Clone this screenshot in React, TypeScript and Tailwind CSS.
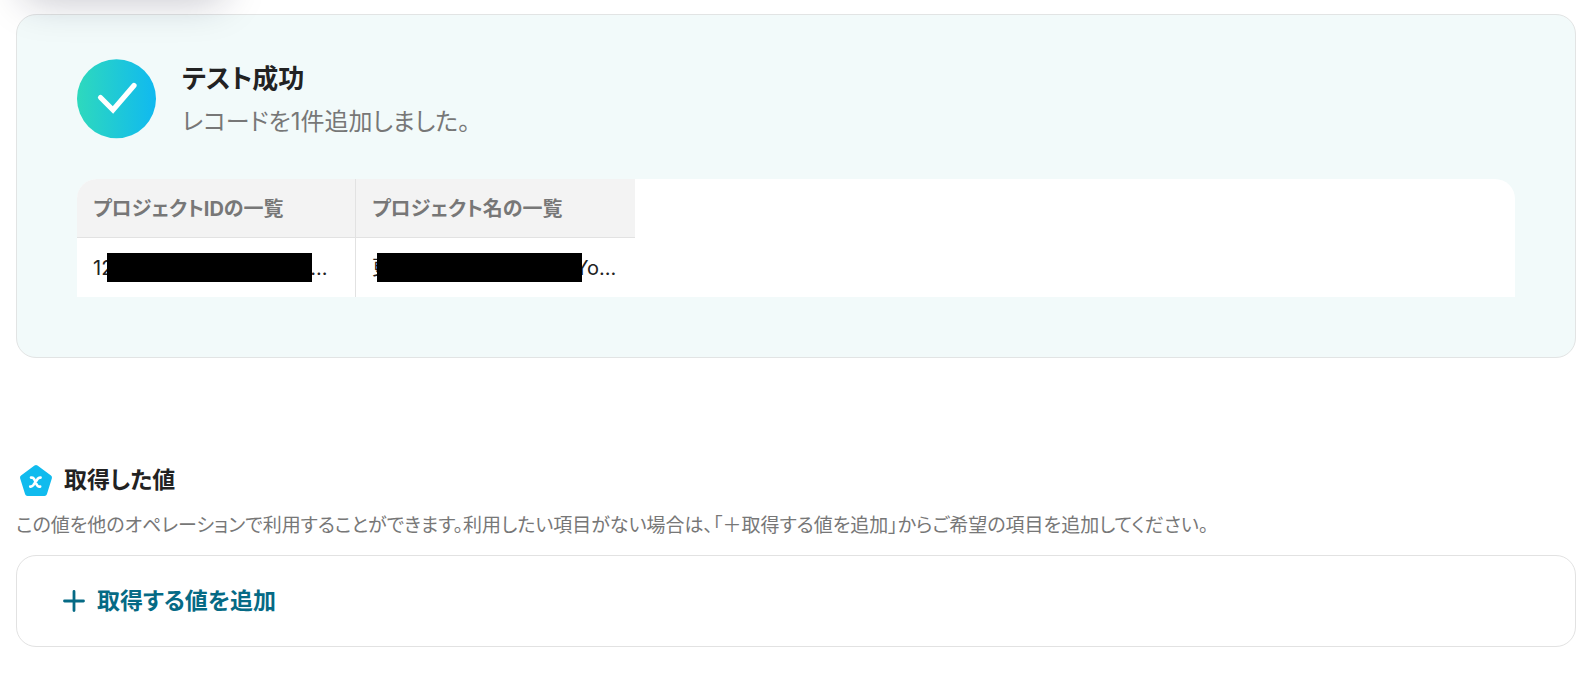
import React from 'react';

const columns = [
  { label: 'プロジェクトIDの一覧', head: '12', tail: '...', mask: '-ml-1.5', gap: '-ml-0.5' },
  { label: 'プロジェクト名の一覧', head: '更', tail: 'Yo...', mask: '-ml-[15px]', gap: '-ml-[7px]' },
];

function SuccessIcon() {
  return (
    <svg viewBox="0 0 80 80" className="size-20 shrink-0" aria-hidden="true">
      <defs>
        <linearGradient id="success" x1="0" y1="0" x2="1" y2="0">
          <stop offset="0" stopColor="#2ed9bd" />
          <stop offset="1" stopColor="#10b9f0" />
        </linearGradient>
      </defs>
      <circle cx="39.5" cy="39.7" r="39.5" fill="url(#success)" />
      <path
        d="M23.5 38.5 L36 51 L57 26.5"
        fill="none"
        stroke="#fff"
        strokeWidth="5.2"
        strokeLinecap="round"
      />
    </svg>
  );
}

function ValueIcon() {
  return (
    <svg viewBox="0 0 40 40" className="size-10 shrink-0" aria-hidden="true">
      <path
        d="M20 7.5 L33.5 17.5 L28.5 33.5 H11.5 L6.5 17.5 Z"
        fill="#10bbee"
        stroke="#10bbee"
        strokeWidth="5"
        strokeLinejoin="round"
      />
      <path
        d="M15 17.6 H16 Q17.3 17.6 18 18.8 L21 25.2 Q21.7 26.6 23 26.6 H24.2 M24.6 17.6 H24 Q22.6 17.6 21.6 18.9 L17.2 25.3 Q16.2 26.6 14.8 26.6 H14.2"
        fill="none"
        stroke="#fff"
        strokeWidth="2.6"
        strokeLinecap="round"
      />
    </svg>
  );
}

function PlusIcon() {
  return (
    <svg viewBox="0 0 22 22" className="size-[22px] shrink-0" aria-hidden="true">
      <path d="M11 1.5 V20.5 M1.5 11 H20.5" stroke="#056a85" strokeWidth="2.8" strokeLinecap="round" />
    </svg>
  );
}

export default function App() {
  return (
    <main
      lang="ja"
      className="relative overflow-hidden bg-white pt-3.5 pr-3.5 pb-7 pl-4 font-['Inter','Noto_Sans_CJK_JP',sans-serif] text-[#222] [font-feature-settings:'palt']"
    >
      {/* Sombra do painel que fica acima da área visível */}
      <div className="pointer-events-none absolute -top-14 left-6 h-12 w-50 rounded-xl shadow-[0_8px_40px_rgba(20,20,50,0.26)]" />

      <section className="rounded-[20px] border border-[#e2e4e4] bg-[#f2fafa] px-15 pt-11 pb-15">
        <div className="flex items-start gap-[25px]">
          <SuccessIcon />
          <div>
            <h2 className="text-[26px] leading-10 font-bold">テスト成功</h2>
            <p className="pt-1 text-[24px] leading-[38px] text-[#777]">レコードを1件追加しました。</p>
          </div>
        </div>

        <div className="mt-[38px] overflow-hidden rounded-t-[20px] bg-white">
          <table className="w-[558px] table-fixed border-separate border-spacing-0">
            <thead>
              <tr className="h-[59px] bg-[#f3f3f3]">
                {columns.map((c) => (
                  <th
                    key={c.label}
                    className="border-r border-b border-[#e2e2e2] px-4 pt-0.5 text-left text-[20px] font-bold text-[#777] last:border-r-0"
                  >
                    {c.label}
                  </th>
                ))}
              </tr>
            </thead>
            <tbody>
              <tr className="h-[59px]">
                {columns.map((c) => (
                  <td key={c.label} className="border-r border-[#e2e2e2] px-4 text-[20px] last:border-r-0">
                    <div className="flex items-center">
                      <span>{c.head}</span>
                      <span className={`relative h-[29px] w-[205px] shrink-0 bg-black ${c.mask}`} />
                      <span className={c.gap}>{c.tail}</span>
                    </div>
                  </td>
                ))}
              </tr>
            </tbody>
          </table>
        </div>
      </section>

      <section className="mt-[102px]">
        <div className="flex items-center gap-2">
          <ValueIcon />
          <h2 className="text-[23px] leading-9 font-bold">取得した値</h2>
        </div>
        <p className="mt-3 text-[19px] leading-7 text-[#777]">
          この値を他のオペレーションで利用することができます。利用したい項目がない場合は、「＋取得する値を追加」からご希望の項目を追加してください。
        </p>
        <div className="mt-[15px] rounded-[20px] border border-[#e2e2e2] px-[46px] py-6">
          <button type="button" className="flex items-center gap-3 text-[23px] leading-[42px] font-bold text-[#056a85]">
            <PlusIcon />
            取得する値を追加
          </button>
        </div>
      </section>
    </main>
  );
}
